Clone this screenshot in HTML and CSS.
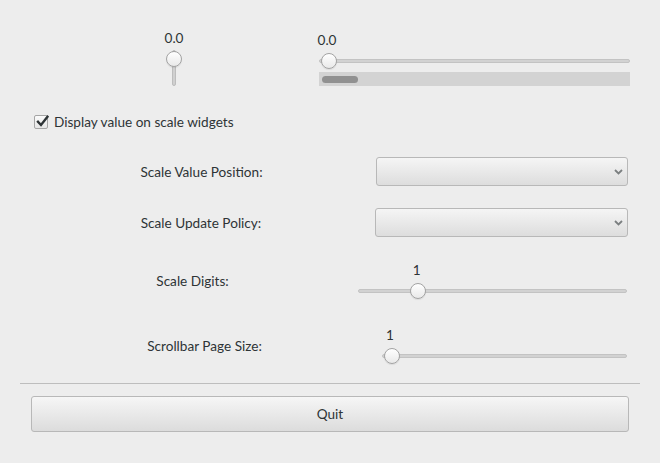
FILE: index.html
```html
<!DOCTYPE html>
<html>
<head>
<meta charset="utf-8">
<link rel="stylesheet" href="styles.css">
</head>
<body>
<div class="window">
  <div class="top">
    <div class="vcol">
      <span class="value">0.0</span>
      <div class="vtrack"><span class="knob vknob"></span></div>
    </div>
    <div class="hcol">
      <div class="hscale" style="--f:0">
        <span class="value hvalue">0.0</span>
        <div class="htrack"><span class="knob hknob"></span></div>
      </div>
      <div class="scrollbar"><span class="slider"></span></div>
    </div>
  </div>

  <div class="check-row">
    <span class="checkbox">
      <svg width="14" height="14" viewBox="0 0 14 14"><path d="M3 6.8 L6 10 L12.5 1.8" fill="none" stroke="#2e3436" stroke-width="2.4" stroke-linecap="square" stroke-linejoin="miter"/></svg>
    </span>
    <span>Display value on scale widgets</span>
  </div>

  <div class="row row-combo1">
    <span class="row-label">Scale Value Position:</span>
    <div class="combo combo1">
      <svg class="chev" width="9" height="6" viewBox="0 0 9 6"><path d="M1 1 L4.5 4.5 L8 1" fill="none" stroke="#7b7f80" stroke-width="1.8"/></svg>
    </div>
  </div>

  <div class="row row-combo2">
    <span class="row-label">Scale Update Policy:</span>
    <div class="combo combo2">
      <svg class="chev" width="9" height="6" viewBox="0 0 9 6"><path d="M1 1 L4.5 4.5 L8 1" fill="none" stroke="#7b7f80" stroke-width="1.8"/></svg>
    </div>
  </div>

  <div class="row row-scale1">
    <span class="row-label">Scale Digits:</span>
    <div class="hscale digits" style="--f:0.2">
      <span class="value hvalue">1</span>
      <div class="htrack"><span class="knob hknob"></span></div>
    </div>
  </div>

  <div class="row row-scale2">
    <span class="row-label">Scrollbar Page Size:</span>
    <div class="hscale pagesize" style="--f:0">
      <span class="value hvalue">1</span>
      <div class="htrack"><span class="knob hknob"></span></div>
    </div>
  </div>

  <div class="separator"></div>

  <div class="button-row">
    <button class="btn">Quit</button>
  </div>
</div>
</body>
</html>
```

FILE: styles.css
```css
html, body {
  margin: 0;
  padding: 0;
  background: #ededed;
}
body {
  font-family: Lato, "Noto Sans", sans-serif;
  font-size: 13.6px;
  color: #2e3436;
  width: 660px;
  height: 463px;
  overflow: hidden;
}
.window {
  display: flex;
  flex-direction: column;
}

/* top section */
.top {
  display: flex;
  height: 100px;
  padding-left: 29px;
  box-sizing: border-box;
  padding-top: 30px;
}
.vcol {
  width: 290px;
  display: flex;
  flex-direction: column;
  align-items: center;
}
.value {
  display: block;
  height: 16px;
  line-height: 16px;
  font-size: 13.6px;
  white-space: nowrap;
}
.vtrack {
  position: relative;
  margin-top: 4px;
  width: 4px;
  height: 36px;
  background: #d0d0d0;
  border: 1px solid #bdbdbd;
  border-radius: 3px;
  box-sizing: border-box;
}
.knob {
  position: absolute;
  width: 16px;
  height: 16px;
  box-sizing: border-box;
  border-radius: 50%;
  border: 1px solid #a3a3a3;
  background: linear-gradient(#ffffff, #e9e9e9);
  box-shadow: 0 1px 1px rgba(0,0,0,0.08);
}
.vknob {
  left: -7px;
  top: 0;
}
.hcol {
  width: 311px;
  padding-top: 2px;
  display: flex;
  flex-direction: column;
}
.hscale {
  position: relative;
  height: 38px;
}
.hvalue {
  position: absolute;
  top: 0;
  left: calc(8px + var(--f) * (100% - 16px));
  transform: translateX(-50%);
}
.htrack {
  position: absolute;
  left: 0;
  right: 0;
  top: 27px;
  height: 4px;
  box-sizing: border-box;
  background: #d2d2d2;
  border: 1px solid #c3c3c3;
  border-radius: 3px;
}
.hknob {
  top: -7px;
  left: calc(var(--f) * (100% - 16px) + 1px);
}
.scrollbar {
  margin-top: 2px;
  height: 14px;
  background: #d3d3d3;
  display: flex;
  align-items: center;
  padding-left: 3px;
}
.slider {
  width: 36px;
  height: 7px;
  border-radius: 4px;
  background: #919191;
}

/* checkbox */
.check-row {
  display: flex;
  align-items: center;
  margin-top: 15px;
  height: 14px;
  padding-left: 34px;
  gap: 6px;
}
.checkbox {
  position: relative;
  width: 14px;
  height: 14px;
  box-sizing: border-box;
  border: 1px solid #a5a5a5;
  border-radius: 2px;
  background: linear-gradient(#fbfbfb, #e6e6e6);
}
.checkbox svg {
  position: absolute;
  left: 0;
  top: -1px;
}

/* rows */
.row {
  display: flex;
  align-items: center;
  padding-left: 27px;
  padding-right: 32px;
}
.row-label {
  flex: 1;
  text-align: center;
  white-space: nowrap;
}
.row-combo1 { margin-top: 28px; height: 29px; }
.row-combo2 { margin-top: 22px; height: 29px; }
.row-scale1 { margin-top: 25px; height: 38px; padding-right: 33px; }
.row-scale2 { margin-top: 27px; height: 38px; padding-right: 33px; }

.combo {
  position: relative;
  height: 29px;
  box-sizing: border-box;
  border: 1px solid #b8b8b8;
  border-radius: 3px;
  background: linear-gradient(#f5f5f5, #dddddd);
}
.combo1 { width: 252px; }
.combo2 { width: 253px; }
.chev {
  position: absolute;
  right: 4px;
  top: 11px;
}
.digits { width: 269px; }
.pagesize { width: 245px; }

.separator {
  margin: 18px 20px 0 20px;
  height: 1px;
  background: #bdbdbd;
}
.button-row {
  margin-top: 12px;
  padding: 0 31px;
}
.btn {
  display: block;
  width: 100%;
  height: 36px;
  box-sizing: border-box;
  border: 1px solid #b8b8b8;
  border-radius: 3px;
  background: linear-gradient(#f6f6f6, #dcdcdc);
  font-family: inherit;
  font-size: 13.6px;
  color: #2e3436;
  padding: 0;
}
```
